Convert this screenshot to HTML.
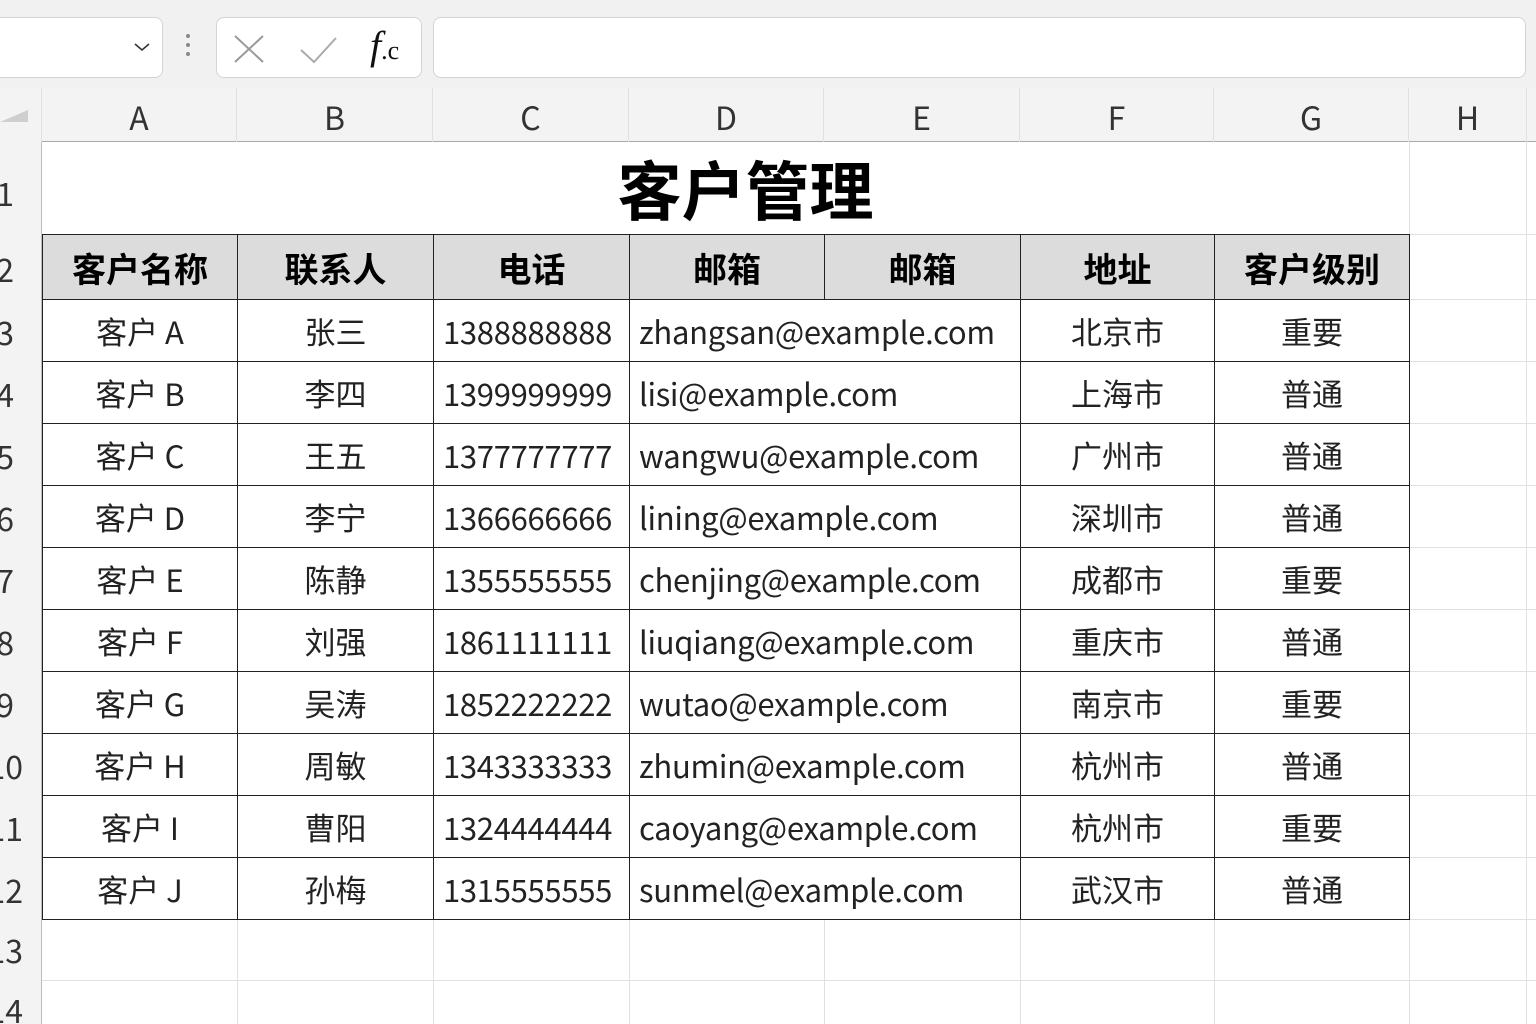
<!DOCTYPE html>
<html><head><meta charset="utf-8"><style>
*{margin:0;padding:0;box-sizing:border-box}
body{width:1536px;height:1024px;overflow:hidden;background:#fff;position:relative;font-family:"Noto Sans CJK SC","Liberation Sans",sans-serif;color:#222}
.top{position:absolute;left:0;top:0;width:1536px;height:88px;background:#f1f1f1}
.box{position:absolute;background:#fff;border:1px solid #d4d4d4;border-radius:8px}
.colh{position:absolute;top:88px;height:54px;background:#f3f3f3;border-bottom:1px solid #a8a8a8}
.colh div{position:absolute;top:0;height:54px;border-right:1px solid #e0e0e0;text-align:center;line-height:58px;font-size:32px;color:#333}
.rowh{position:absolute;left:0;top:142px;width:42px;height:882px;background:#f3f3f3;border-right:1px solid #bdbdbd;overflow:hidden}
.rn{position:absolute;right:27px;font-size:32px;color:#333;text-align:right}
.gv{position:absolute;width:1px;background:#e0e0e0}
.gh{position:absolute;height:1px;background:#e0e0e0}
table{position:absolute;left:42px;top:234px;border-collapse:collapse;table-layout:fixed}
td{border:1px solid #222;height:62px;font-size:31px;text-align:center;white-space:nowrap;overflow:hidden;padding:0}
tr.h td{height:65px;background:#dcdcdc;font-weight:bold;font-size:34px;color:#000}
td.l{text-align:left;padding-left:9px;letter-spacing:-0.3px}
</style></head><body>
<div class="top"></div>
<div class="box" style="left:-10px;top:17px;width:173px;height:61px"></div>
<svg style="position:absolute;left:134px;top:42px" width="16" height="10"><path d="M1 2 L8 8 L15 2" stroke="#333" stroke-width="1.6" fill="none"/></svg>
<div style="position:absolute;left:186px;top:34px;width:4px;height:4px;border-radius:2px;background:#888"></div>
<div style="position:absolute;left:186px;top:43px;width:4px;height:4px;border-radius:2px;background:#888"></div>
<div style="position:absolute;left:186px;top:52px;width:4px;height:4px;border-radius:2px;background:#888"></div>
<div class="box" style="left:216px;top:17px;width:206px;height:61px"></div>
<svg style="position:absolute;left:233px;top:34px" width="32" height="30"><path d="M2 2 L30 28 M30 2 L2 28" stroke="#999" stroke-width="2" fill="none"/></svg>
<svg style="position:absolute;left:299px;top:36px" width="40" height="28"><path d="M2 14 L15 26 L37 2" stroke="#aaa" stroke-width="2" fill="none"/></svg>
<div style="position:absolute;left:370px;top:22px;font-family:'Liberation Serif',serif;font-style:italic;font-size:40px;color:#111">f<span style="font-style:normal;font-size:26px">.c</span></div>
<div class="box" style="left:433px;top:17px;width:1093px;height:61px"></div>

<div class="colh" style="left:0;width:1536px">
<div style="left:0;width:42px;background:#f3f3f3"><svg style="position:absolute;left:0;top:22px" width="30" height="12"><path d="M0 12 L28 12 L28 0 Z" fill="#cfcfcf"/></svg></div>
<div style="left:42px;width:195px">A</div><div style="left:237px;width:196px">B</div><div style="left:433px;width:196px">C</div><div style="left:629px;width:195px">D</div><div style="left:824px;width:196px">E</div><div style="left:1020px;width:194px">F</div><div style="left:1214px;width:195px">G</div><div style="left:1409px;width:118px">H</div>
</div>
<div class="rowh">
<div class="rn" style="top:28px">1</div><div class="rn" style="top:104px">2</div><div class="rn" style="top:167px">3</div><div class="rn" style="top:229px">4</div><div class="rn" style="top:291px">5</div><div class="rn" style="top:353px">6</div><div class="rn" style="top:415px">7</div><div class="rn" style="top:477px">8</div><div class="rn" style="top:539px">9</div><div class="rn" style="top:601px;right:18px">10</div><div class="rn" style="top:663px;right:18px">11</div><div class="rn" style="top:725px;right:18px">12</div><div class="rn" style="top:785px;right:18px">13</div><div class="rn" style="top:845px;right:18px">14</div>
</div>
<div class="gh" style="left:42px;top:980px;width:1494px"></div>
<div class="gh" style="left:1409px;top:234px;width:127px"></div>
<div class="gh" style="left:1409px;top:299px;width:127px"></div>
<div class="gh" style="left:1409px;top:361px;width:127px"></div><div class="gh" style="left:1409px;top:423px;width:127px"></div><div class="gh" style="left:1409px;top:485px;width:127px"></div><div class="gh" style="left:1409px;top:547px;width:127px"></div><div class="gh" style="left:1409px;top:609px;width:127px"></div><div class="gh" style="left:1409px;top:671px;width:127px"></div><div class="gh" style="left:1409px;top:733px;width:127px"></div><div class="gh" style="left:1409px;top:795px;width:127px"></div><div class="gh" style="left:1409px;top:857px;width:127px"></div><div class="gh" style="left:1409px;top:919px;width:127px"></div>
<div class="gv" style="left:1409px;top:142px;height:882px"></div>
<div class="gv" style="left:1526px;top:142px;height:882px"></div>
<div class="gv" style="left:237px;top:919px;height:105px"></div><div class="gv" style="left:433px;top:919px;height:105px"></div><div class="gv" style="left:629px;top:919px;height:105px"></div><div class="gv" style="left:824px;top:919px;height:105px"></div><div class="gv" style="left:1020px;top:919px;height:105px"></div><div class="gv" style="left:1214px;top:919px;height:105px"></div>
<div style="position:absolute;left:42px;top:142px;width:1367px;height:92px;text-align:center;font-weight:bold;font-size:64px;line-height:92px;color:#000;padding-left:40px">客户管理</div>
<table>
<colgroup><col style="width:195px"><col style="width:196px"><col style="width:196px"><col style="width:195px"><col style="width:196px"><col style="width:194px"><col style="width:195px"></colgroup>
<tr class="h"><td>客户名称</td><td>联系人</td><td>电话</td><td>邮箱</td><td>邮箱</td><td>地址</td><td>客户级别</td></tr>
<tr><td>客户 A</td><td>张三</td><td class="l">1388888888</td><td class="l" colspan="2">zhangsan@example.com</td><td>北京市</td><td>重要</td></tr>
<tr><td>客户 B</td><td>李四</td><td class="l">1399999999</td><td class="l" colspan="2">lisi@example.com</td><td>上海市</td><td>普通</td></tr>
<tr><td>客户 C</td><td>王五</td><td class="l">1377777777</td><td class="l" colspan="2">wangwu@example.com</td><td>广州市</td><td>普通</td></tr>
<tr><td>客户 D</td><td>李宁</td><td class="l">1366666666</td><td class="l" colspan="2">lining@example.com</td><td>深圳市</td><td>普通</td></tr>
<tr><td>客户 E</td><td>陈静</td><td class="l">1355555555</td><td class="l" colspan="2">chenjing@example.com</td><td>成都市</td><td>重要</td></tr>
<tr><td>客户 F</td><td>刘强</td><td class="l">1861111111</td><td class="l" colspan="2">liuqiang@example.com</td><td>重庆市</td><td>普通</td></tr>
<tr><td>客户 G</td><td>吴涛</td><td class="l">1852222222</td><td class="l" colspan="2">wutao@example.com</td><td>南京市</td><td>重要</td></tr>
<tr><td>客户 H</td><td>周敏</td><td class="l">1343333333</td><td class="l" colspan="2">zhumin@example.com</td><td>杭州市</td><td>普通</td></tr>
<tr><td>客户 I</td><td>曹阳</td><td class="l">1324444444</td><td class="l" colspan="2">caoyang@example.com</td><td>杭州市</td><td>重要</td></tr>
<tr><td>客户 J</td><td>孙梅</td><td class="l">1315555555</td><td class="l" colspan="2">sunmel@example.com</td><td>武汉市</td><td>普通</td></tr>
</table>
</body></html>
